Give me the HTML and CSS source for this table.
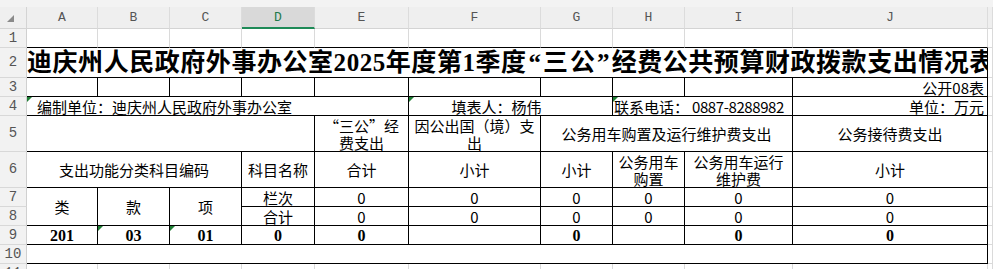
FILE: index.html
```html
<!DOCTYPE html>
<html lang="zh">
<head>
<meta charset="utf-8">
<title>三公经费</title>
<link rel="stylesheet" href="styles.css">
</head>
<body>
<div class="top-strip"></div>
<table class="sheet">
  <colgroup>
    <col class="col-rh"><col class="col-a"><col class="col-b"><col class="col-c"><col class="col-d"><col class="col-e"><col class="col-f"><col class="col-g"><col class="col-h"><col class="col-i"><col class="col-j"><col class="col-x">
  </colgroup>
  <tr class="row-hdr">
    <th class="corner"></th><th class="ch">A</th><th class="ch">B</th><th class="ch">C</th><th class="ch sel">D</th><th class="ch">E</th><th class="ch">F</th><th class="ch">G</th><th class="ch">H</th><th class="ch">I</th><th class="ch">J</th><th class="ch"></th>
  </tr>
  <tr class="row-s">
    <th class="rh">1</th><td class="edge"></td><td class="edge"></td><td class="edge"></td><td class="edge"></td><td class="edge"></td><td class="edge"></td><td class="edge"></td><td class="edge"></td><td class="edge"></td><td class="edge"></td><td></td>
  </tr>
  <tr class="row-t">
    <th class="rh">2</th><td colspan="10" class="boxed title">迪庆州人民政府外事办公室2025年度第1季度<span class="quote">“三公”</span>经费公共预算财政拨款支出情况表</td><td></td>
  </tr>
  <tr class="row-s">
    <th class="rh">3</th><td class="boxed"></td><td class="boxed"></td><td class="boxed"></td><td class="boxed"></td><td class="boxed"></td><td class="boxed"></td><td class="boxed"></td><td class="boxed"></td><td class="boxed"></td><td class="boxed to-right">公开08表</td><td></td>
  </tr>
  <tr class="row-s">
    <th class="rh">4</th><td colspan="5" class="boxed to-left indent flag">编制单位：迪庆州人民政府外事办公室</td><td colspan="2" class="boxed flag filler">填表人：杨伟</td><td colspan="2" class="boxed to-left flag phone">联系电话：<span class="num"> 0887-8288982</span></td><td class="boxed to-right">单位：万元</td><td></td>
  </tr>
  <tr class="row-m">
    <th class="rh">5</th><td colspan="4" class="boxed"></td><td class="boxed">“三公”经<br>费支出</td><td class="boxed">因公出国（境）支<br>出</td><td colspan="3" class="boxed">公务用车购置及运行维护费支出</td><td class="boxed">公务接待费支出</td><td></td>
  </tr>
  <tr class="row-m">
    <th class="rh">6</th><td colspan="3" class="boxed">支出功能分类科目编码</td><td class="boxed">科目名称</td><td class="boxed">合计</td><td class="boxed">小计</td><td class="boxed">小计</td><td class="boxed">公务用车<br>购置</td><td class="boxed">公务用车运行<br>维护费</td><td class="boxed">小计</td><td></td>
  </tr>
  <tr class="row-s">
    <th class="rh">7</th><td rowspan="2" class="boxed">类</td><td rowspan="2" class="boxed">款</td><td rowspan="2" class="boxed">项</td><td class="boxed">栏次</td><td class="boxed">0</td><td class="boxed">0</td><td class="boxed">0</td><td class="boxed">0</td><td class="boxed">0</td><td class="boxed">0</td><td></td>
  </tr>
  <tr class="row-s">
    <th class="rh">8</th><td class="boxed">合计</td><td class="boxed">0</td><td class="boxed">0</td><td class="boxed">0</td><td class="boxed">0</td><td class="boxed">0</td><td class="boxed">0</td><td></td>
  </tr>
  <tr class="row-s">
    <th class="rh">9</th><td class="boxed strong">201</td><td class="boxed strong flag">03</td><td class="boxed strong flag">01</td><td class="boxed strong">0</td><td class="boxed strong">0</td><td class="boxed"></td><td class="boxed strong">0</td><td class="boxed"></td><td class="boxed strong">0</td><td class="boxed strong">0</td><td></td>
  </tr>
  <tr class="row-s">
    <th class="rh">10</th><td colspan="10" class="boxed"></td><td></td>
  </tr>
  <tr class="row-s">
    <th class="rh">11</th><td></td><td></td><td></td><td></td><td></td><td></td><td></td><td></td><td></td><td></td><td></td>
  </tr>
</table>
</body>
</html>
```
FILE: styles.css
```css
html, body {
  margin: 0;
  padding: 0;
  background: #ffffff;
}
body {
  width: 993px;
  height: 269px;
  overflow: hidden;
  font-family: "Noto Sans CJK SC", sans-serif;
}
.top-strip {
  height: 7px;
  background: #f3f3f3;
}
.sheet {
  border-collapse: separate;
  border-spacing: 0;
  table-layout: fixed;
  width: 993px;
}
.col-rh { width: 27px; }
.col-a { width: 71px; }
.col-b { width: 72px; }
.col-c { width: 72px; }
.col-d { width: 73px; }
.col-e { width: 94px; }
.col-f { width: 132px; }
.col-g { width: 72px; }
.col-h { width: 72px; }
.col-i { width: 108px; }
.col-j { width: 195px; }
.col-x { width: 5px; }

.sheet td, .sheet th {
  padding: 0 2px;
  border-right: 1px solid #dadada;
  border-bottom: 1px solid #dadada;
  font-size: 15px;
  line-height: 17px;
  text-align: center;
  vertical-align: middle;
  white-space: nowrap;
  font-weight: normal;
  color: #000;
  box-sizing: border-box;
}
.row-hdr { height: 22px; }
.row-s { height: 19px; }
.row-t { height: 30px; }
.row-m { height: 36px; }

.sheet .corner {
  background: #efefef;
  position: relative;
  border-right-color: #d4d4d4;
  border-bottom-color: #d4d4d4;
}
.corner::after {
  content: "";
  position: absolute;
  left: 7px;
  bottom: 6px;
  border-left: 7px solid transparent;
  border-bottom: 7px solid #8a8a8a;
}
.sheet .ch {
  background: #efefef;
  font-family: "Liberation Mono", monospace;
  font-size: 13px;
  color: #555;
  border-right-color: #dcdcdc;
  border-bottom-color: #d4d4d4;
}
.sheet .ch.sel {
  background: #d9d9d9;
  color: #1e7a4c;
  border-bottom: 2px solid #1e8a57;
}
.sheet .rh {
  background: #f2f2f2;
  font-family: "Liberation Mono", monospace;
  font-size: 14px;
  color: #555;
  padding: 0;
  border-right-color: #d0d0d0;
  border-bottom-color: #d8d8d8;
}
.sheet td.edge {
  border-bottom-color: #000;
}
.sheet td.boxed {
  border-right-color: #000;
  border-bottom-color: #000;
}
.sheet td.title {
  font-family: "Liberation Serif", "Noto Sans CJK SC", serif;
  font-weight: bold;
  font-size: 25px;
  line-height: 29px;
  text-align: left;
  padding: 0;
  overflow: hidden;
  letter-spacing: 0.55px;
}
.quote {
  letter-spacing: 2px;
  padding-left: 2px;
}
.sheet td.to-right {
  text-align: right;
  padding-right: 3px;
}
.sheet td.to-left {
  text-align: left;
}
.sheet td.indent {
  padding-left: 10px;
}
.sheet td.filler {
  padding-right: 30px;
}
.sheet td.phone {
  padding-left: 1px;
  overflow: hidden;
}
.num {
  letter-spacing: -0.4px;
}
.sheet td.strong {
  font-family: "Liberation Serif", serif;
  font-weight: bold;
  font-size: 16px;
}
.flag {
  position: relative;
}
.flag::before {
  content: "";
  position: absolute;
  left: 0;
  top: 0;
  border-top: 5px solid #1f7f35;
  border-right: 5px solid transparent;
}
```
